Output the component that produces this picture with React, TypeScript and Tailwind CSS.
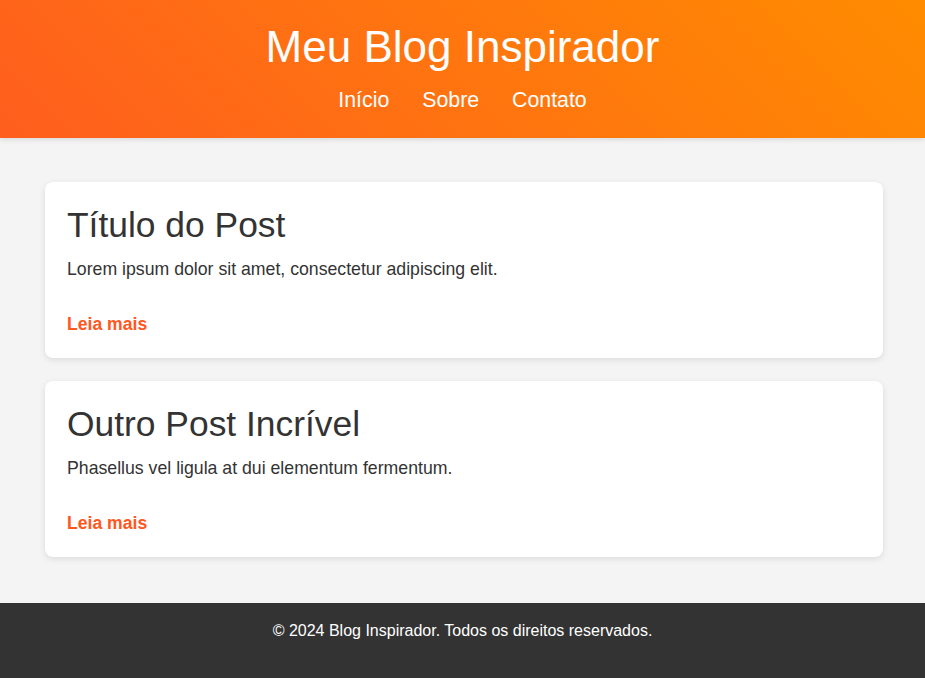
import React from "react";

type Post = {
  title: string;
  excerpt: string;
};

const posts: Post[] = [
  {
    title: "Título do Post",
    excerpt: "Lorem ipsum dolor sit amet, consectetur adipiscing elit.",
  },
  {
    title: "Outro Post Incrível",
    excerpt: "Phasellus vel ligula at dui elementum fermentum.",
  },
];

const App: React.FC = () => {
  return (
    <div className="min-h-screen bg-[#f4f4f4] font-['Liberation_Sans',Arial,sans-serif] text-[#333]">
      {/* Header */}
      <header className="bg-[linear-gradient(45deg,#ff5e1e,#ff8c00)] pt-[22px] pb-[26px] text-center text-white shadow-[0_2px_5px_rgba(0,0,0,0.1)]">
        <h1 className="text-[44px] leading-[50px] font-normal">
          Meu Blog Inspirador
        </h1>
        <nav className="mt-[16px] flex justify-center gap-[33px] text-[21.3px] leading-[24px]">
          <a href="#" className="text-white">
            Início
          </a>
          <a href="#" className="text-white">
            Sobre
          </a>
          <a href="#" className="text-white">
            Contato
          </a>
        </nav>
      </header>

      {/* Posts */}
      <main className="flex flex-col gap-[23px] pl-[45px] pr-[42px] pt-[44px] pb-[46px]">
        {posts.map((post) => (
          <article
            key={post.title}
            className="rounded-lg bg-white px-[22px] pt-[22px] pb-[21px] shadow-[0_2px_6px_rgba(0,0,0,0.1)]"
          >
            <h2 className="text-[35.4px] leading-[42px] font-normal">
              {post.title}
            </h2>
            <p className="mt-[10px] text-[17.7px] leading-[26px]">
              {post.excerpt}
            </p>
            <a
              href="#"
              className="mt-[29px] block text-[17.6px] leading-[26px] font-bold text-[#ff5722]"
            >
              Leia mais
            </a>
          </article>
        ))}
      </main>

      {/* Footer */}
      <footer className="bg-[#333] pt-[16px] pb-[35px] text-center text-white">
        <p className="text-[16px] leading-[24px]">
          © 2024 Blog Inspirador. Todos os direitos reservados.
        </p>
      </footer>
    </div>
  );
};

export default App;
